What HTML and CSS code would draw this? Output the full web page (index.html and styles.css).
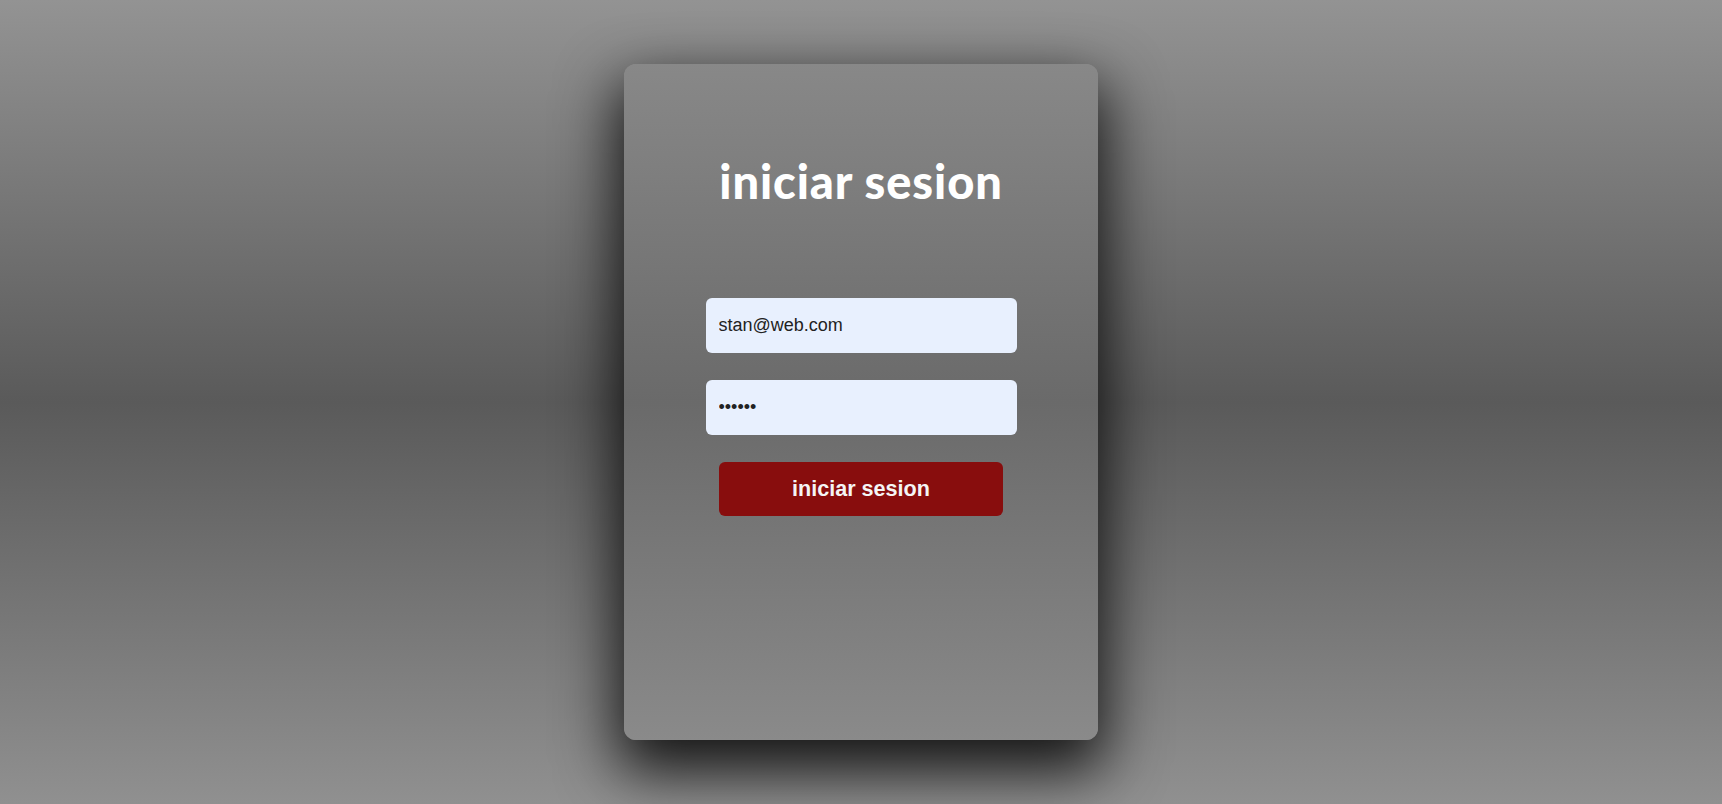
FILE: index.html
```html
<!DOCTYPE html>
<html lang="es">
<head>
<meta charset="utf-8">
<title>iniciar sesion</title>
<link rel="stylesheet" href="styles.css">
</head>
<body>
  <main class="card">
    <h1 class="title">iniciar sesion</h1>
    <form class="form">
      <input class="field" type="email" value="stan@web.com">
      <input class="field" type="password" value="123456">
      <button class="btn" type="button">iniciar sesion</button>
    </form>
  </main>
</body>
</html>
```

FILE: styles.css
```css
* { box-sizing: border-box; }
html, body { height: 100%; }
body {
  margin: 0;
  min-height: 100vh;
  display: flex;
  align-items: center;
  justify-content: center;
  background: linear-gradient(to bottom, #939393 0%, #5a5a5a 50%, #909090 100%);
  font-family: "Liberation Sans", Arial, sans-serif;
  overflow: hidden;
}
.card {
  width: 474px;
  height: 676px;
  border-radius: 12px;
  background: linear-gradient(to bottom, #888888 0%, #6a6a6a 50%, #8a8a8a 100%);
  box-shadow: 0 25px 60px 6px rgba(0, 0, 0, 0.85);
  padding-top: 88px;
  display: flex;
  flex-direction: column;
  align-items: center;
}
.title {
  margin: 0;
  font-family: Lato, "Noto Sans", sans-serif;
  font-weight: 900;
  font-size: 47px;
  line-height: 59px;
  color: #ffffff;
  letter-spacing: 0.9px;
}
.form {
  margin-top: 87px;
  display: flex;
  flex-direction: column;
  align-items: center;
  gap: 27px;
}
.field {
  width: 311px;
  height: 55px;
  border: none;
  border-radius: 6px;
  background: #e8f0fe;
  padding: 0 13px;
  font-family: "Liberation Sans", Arial, sans-serif;
  font-size: 18px;
  color: #222222;
  outline: none;
}
.btn {
  width: 284px;
  height: 54px;
  border: none;
  border-radius: 6px;
  background: #880d0d;
  color: #f5f5f5;
  font-family: "Liberation Sans", Arial, sans-serif;
  font-weight: bold;
  font-size: 21.6px;
  cursor: pointer;
}
```
